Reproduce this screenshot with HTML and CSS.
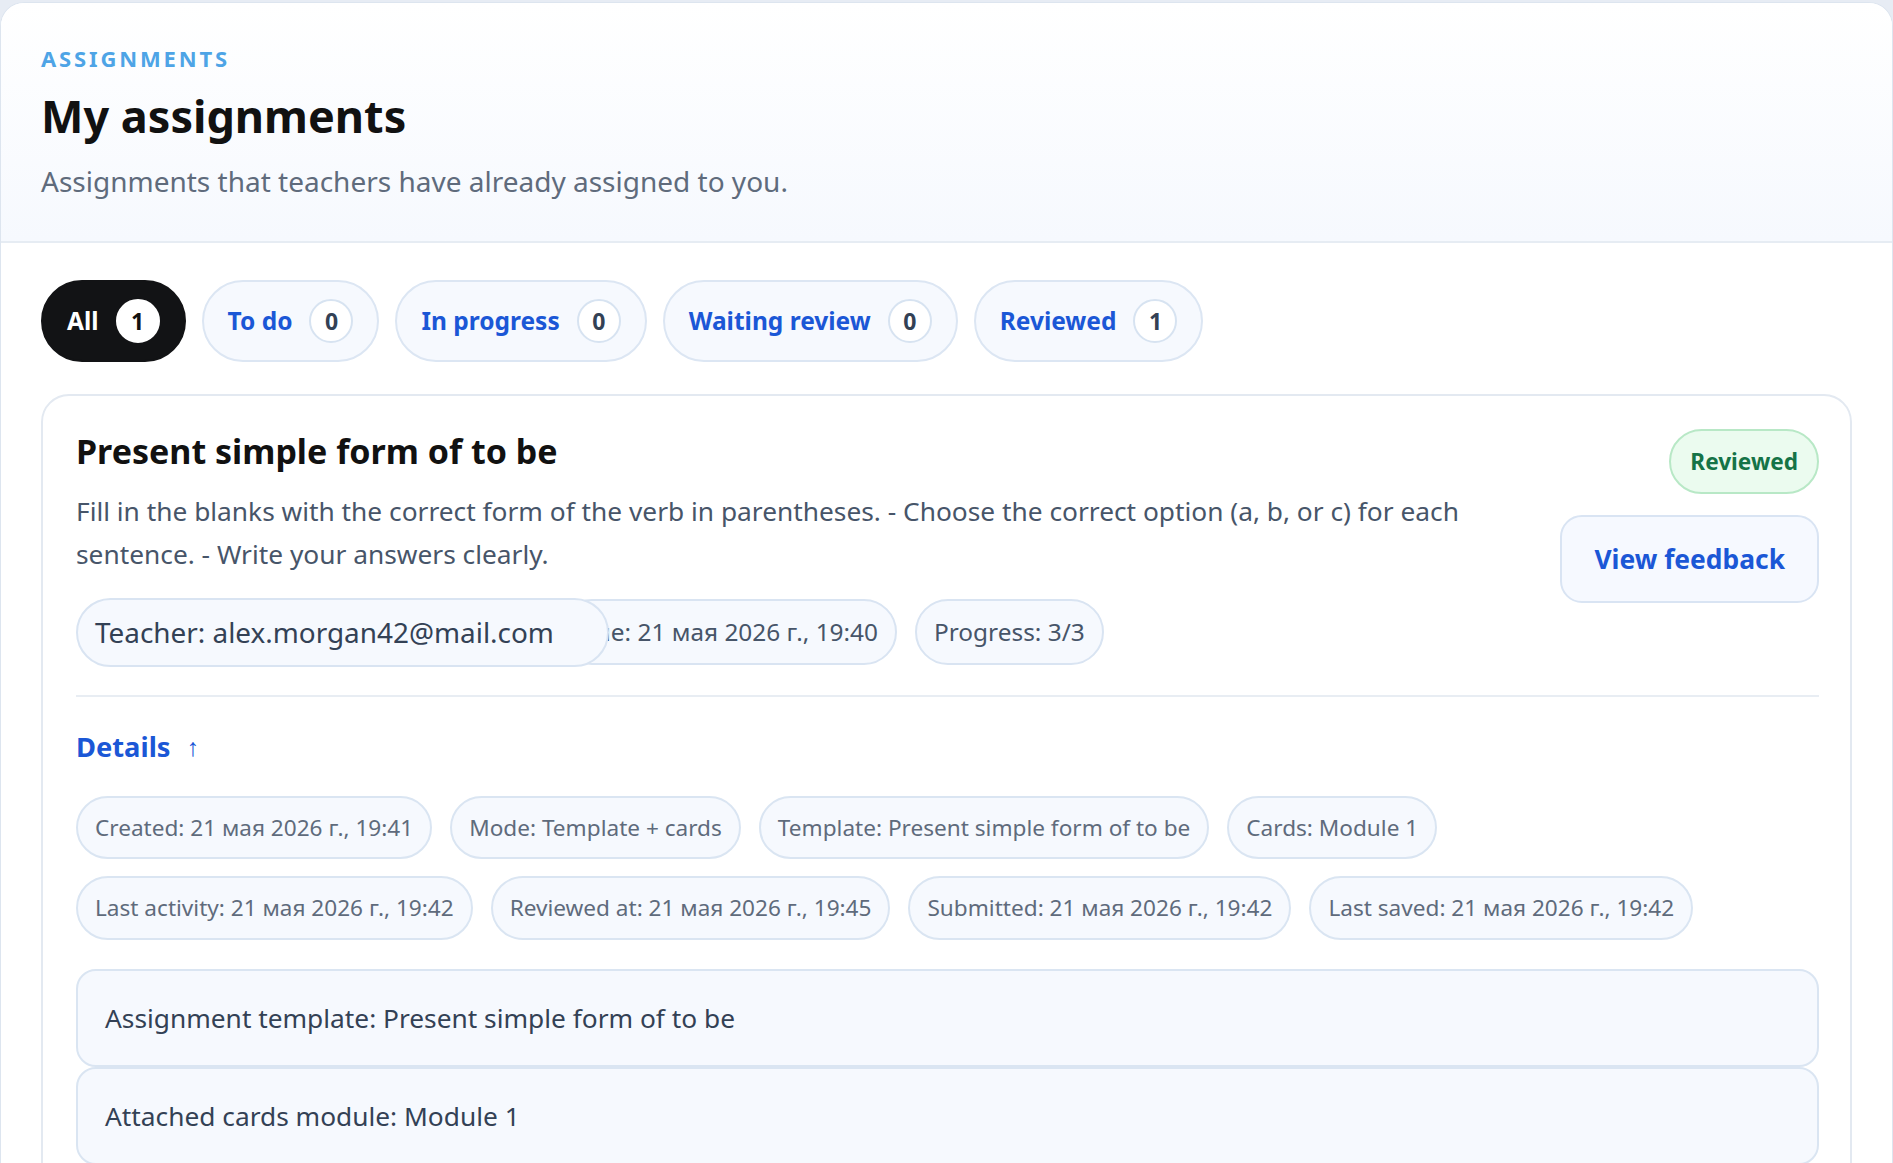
FILE: index.html
```html
<!DOCTYPE html>
<html lang="en">
<head>
  <meta charset="UTF-8" />
  <meta name="viewport" content="width=device-width, initial-scale=1.0"/>
  <title>My assignments</title>
  <link rel="stylesheet" href="styles.css">
</head>
<body>
  <main class="panel">
    <header class="panel-head">
      <p class="eyebrow">Assignments</p>
      <h1>My assignments</h1>
      <p class="lead">Assignments that teachers have already assigned to you.</p>
    </header>

    <section class="panel-body">
      <nav class="tabs">
        <button class="tab active">All <span class="count">1</span></button>
        <button class="tab">To do <span class="count">0</span></button>
        <button class="tab">In progress <span class="count">0</span></button>
        <button class="tab">Waiting review <span class="count">0</span></button>
        <button class="tab">Reviewed <span class="count">1</span></button>
      </nav>

      <article class="assignment">
        <div class="assignment-top">
          <div class="assignment-main">
            <h2>Present simple form of to be</h2>
            <p class="desc">Fill in the blanks with the correct form of the verb in parentheses. - Choose the correct option (a, b, or c) for each sentence. - Write your answers clearly.</p>
            <div class="meta">
              <span class="pill pill-teacher">Teacher: alex.morgan42@mail.com</span>
              <span class="pill pill-due">Due: 21 мая 2026 г., 19:40</span>
              <span class="pill">Progress: 3/3</span>
            </div>
          </div>
          <div class="assignment-side">
            <span class="status">Reviewed</span>
            <button class="btn-feedback">View feedback</button>
          </div>
        </div>

        <div class="details">
          <button class="details-toggle">Details <span class="arrow">↑</span></button>

          <div class="chips">
            <span class="chip">Created: 21 мая 2026 г., 19:41</span>
            <span class="chip">Mode: Template + cards</span>
            <span class="chip">Template: Present simple form of to be</span>
            <span class="chip">Cards: Module 1</span>
            <span class="chip">Last activity: 21 мая 2026 г., 19:42</span>
            <span class="chip">Reviewed at: 21 мая 2026 г., 19:45</span>
            <span class="chip">Submitted: 21 мая 2026 г., 19:42</span>
            <span class="chip">Last saved: 21 мая 2026 г., 19:42</span>
          </div>

          <div class="notes">
            <div class="note">Assignment template: Present simple form of to be</div>
            <div class="note">Attached cards module: Module 1</div>
          </div>
        </div>
      </article>
    </section>
  </main>
</body>
</html>
```

FILE: styles.css
```css
* {
  box-sizing: border-box;
  margin: 0;
  padding: 0;
}

body {
  background-color: #e7ecf4;
  font-family: 'Segoe UI', 'Noto Sans', sans-serif;
  color: #111;
  padding-top: 2px;
  min-height: 100vh;
}

button {
  font-family: inherit;
  cursor: pointer;
}

.panel {
  background: #fff;
  border: 1px solid #dde5ef;
  border-bottom: none;
  border-radius: 24px 24px 0 0;
  min-height: calc(100vh - 2px);
  overflow: hidden;
}

/* header */

.panel-head {
  padding: 42px 40px 39px;
  background: linear-gradient(180deg, #ffffff, #f6f9fe);
  border-bottom: 2px solid #e6ecf3;
}

.eyebrow {
  color: #4ea4e6;
  font-size: 22px;
  font-weight: 700;
  letter-spacing: 0.13em;
  text-transform: uppercase;
  line-height: 1.2;
}

h1 {
  font-size: 45px;
  font-weight: 700;
  line-height: 1.2;
  margin-top: 18px;
  color: #111;
}

.lead {
  font-size: 28px;
  color: #5f6b7c;
  line-height: 1.4;
  margin-top: 19px;
}

/* body */

.panel-body {
  padding: 37px 40px 0;
}

.tabs {
  display: flex;
  gap: 16px;
  margin-bottom: 32px;
}

.tab {
  display: flex;
  align-items: center;
  gap: 17px;
  padding: 17px 24px;
  border-radius: 999px;
  border: 2px solid #dce6f3;
  background: #f6f9fe;
  color: #1b57d6;
  font-size: 24.5px;
  font-weight: 700;
}

.tab.active {
  background: #121315;
  border-color: #121315;
  color: #fff;
}

.count {
  width: 44px;
  height: 44px;
  border-radius: 50%;
  border: 2px solid #d7e3f1;
  background: #fff;
  color: #334155;
  display: flex;
  align-items: center;
  justify-content: center;
  font-size: 23px;
}

.tab.active .count {
  border-color: #fff;
  color: #111;
}

/* card */

.assignment {
  border: 2px solid #e3e9f1;
  border-radius: 28px;
  padding: 33px 31px 33px 33px;
}

.assignment-top {
  display: flex;
  gap: 30px;
}

.assignment-main {
  flex: 1;
}

h2 {
  font-size: 34px;
  font-weight: 700;
  line-height: 1.3;
  color: #111;
}

.desc {
  font-size: 26.3px;
  line-height: 43px;
  color: #475569;
  margin-top: 17px;
}

.meta {
  display: flex;
  align-items: center;
  gap: 18px;
  margin-top: 22px;
}

.pill {
  padding: 15px 17px;
  border-radius: 999px;
  border: 2px solid #d9e4f2;
  background: #f6f9fe;
  color: #475569;
  font-size: 24.4px;
  line-height: 1.3;
  white-space: nowrap;
}

.pill-teacher {
  position: relative;
  z-index: 1;
  padding: 15px 53px 15px 17px;
  font-size: 27.9px;
  line-height: 1.25;
  color: #334155;
}

.pill-due {
  margin-left: -68px;
}

.assignment-side {
  display: flex;
  flex-direction: column;
  align-items: flex-end;
  gap: 21px;
}

.status {
  padding: 16px 19px;
  border-radius: 999px;
  border: 2px solid #b8e8c6;
  background: #ebfbef;
  color: #157347;
  font-size: 22.6px;
  font-weight: 700;
  line-height: 1.3;
}

.btn-feedback {
  padding: 25px 32px;
  border-radius: 22px;
  border: 2px solid #d9e4f3;
  background: #f6f9ff;
  color: #1b57d6;
  font-size: 26.4px;
  font-weight: 700;
  line-height: 1.3;
}

/* details */

.details {
  border-top: 2px solid #e8edf3;
  margin-top: 28px;
  padding-top: 32px;
}

.details-toggle {
  border: none;
  background: none;
  color: #1b57d6;
  font-size: 27.3px;
  font-weight: 700;
  line-height: 1.3;
  display: flex;
  align-items: center;
  gap: 16px;
}

.arrow {
  font-weight: 400;
  font-size: 25px;
}

.chips {
  display: flex;
  flex-wrap: wrap;
  gap: 17px 18px;
  margin-top: 32px;
}

.chip {
  padding: 15px 17px;
  border-radius: 999px;
  border: 2px solid #dae5f2;
  background: #f6f9fe;
  color: #5f6b7c;
  font-size: 22.6px;
  line-height: 1.3;
  white-space: nowrap;
}

.notes {
  margin-top: 29px;
}

.note {
  padding: 30px 27px;
  border: 2px solid #dae5f2;
  border-radius: 20px;
  background: #f6f9fe;
  color: #334155;
  font-size: 26.3px;
  line-height: 1.3;
}
```
